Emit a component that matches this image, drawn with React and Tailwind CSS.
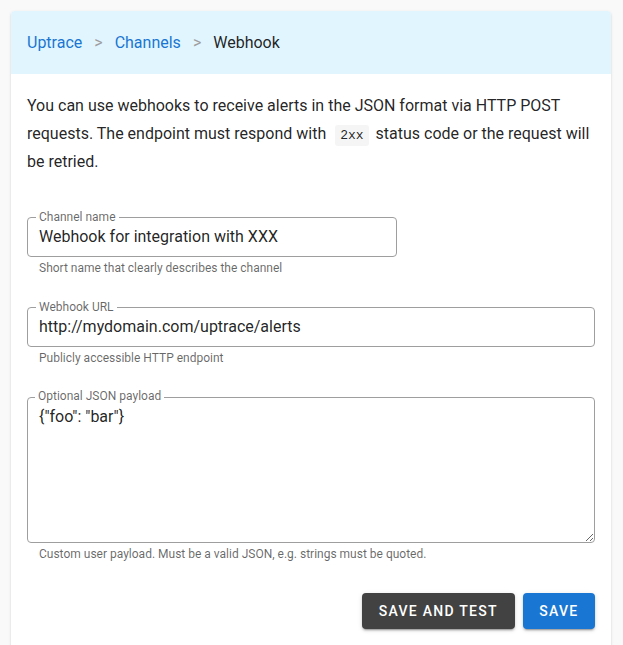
export default function App() {
  return (
    <div className="min-h-[645px] bg-[#f9f9f9] pt-[11px] pl-[11px] pr-[12px] font-['Roboto',sans-serif] text-[rgba(0,0,0,0.87)]">
      <div className="w-[600px] bg-white rounded-t-[4px] shadow-[0_2px_1px_-1px_rgba(0,0,0,0.2),0_1px_1px_0_rgba(0,0,0,0.14),0_1px_3px_0_rgba(0,0,0,0.12)] pb-[20px]">
        {/* Breadcrumbs */}
        <div className="h-[63px] bg-[#e1f5fe] rounded-t-[4px] flex items-center px-4 text-[16px]">
          <a className="text-[#1976d2]">Uptrace</a>
          <span className="px-3 text-[#9e9e9e]">&gt;</span>
          <a className="text-[#1976d2]">Channels</a>
          <span className="px-3 text-[#9e9e9e]">&gt;</span>
          <span>Webhook</span>
        </div>

        <div className="px-4 pt-[18px]">
          <p className="text-[16px] leading-[28px]">
            You can use webhooks to receive alerts in the JSON format via HTTP POST requests. The endpoint must respond with{' '}
            <code className="ml-[5px] mr-[3px] font-['Liberation_Mono',monospace] text-[13px] leading-none bg-[#f5f5f5] rounded-[3px] px-[5px] py-[3px]">2xx</code>{' '}
            status code or the request will be retried.
          </p>

          {/* Channel name */}
          <div className="mt-[41px] w-[370px]">
            <div className="relative h-[40px] border border-[#9e9e9e] rounded-[4px] flex items-center pl-[11px] text-[16px]">
              <span className="absolute -top-[8px] left-[8px] bg-white px-[3px] text-[12px] leading-[14px] text-[rgba(0,0,0,0.6)]">Channel name</span>
              Webhook for integration with XXX
            </div>
            <div className="mt-[4px] pl-[12px] text-[12px] leading-[14px] text-[rgba(0,0,0,0.6)]">
              Short name that clearly describes the channel
            </div>
          </div>

          {/* Webhook URL */}
          <div className="mt-[32px]">
            <div className="relative h-[40px] border border-[#9e9e9e] rounded-[4px] flex items-center pl-[11px] text-[16px]">
              <span className="absolute -top-[8px] left-[8px] bg-white px-[3px] text-[12px] leading-[14px] text-[rgba(0,0,0,0.6)]">Webhook URL</span>
              http://mydomain.com/uptrace/alerts
            </div>
            <div className="mt-[4px] pl-[12px] text-[12px] leading-[14px] text-[rgba(0,0,0,0.6)]">
              Publicly accessible HTTP endpoint
            </div>
          </div>

          {/* JSON payload */}
          <div className="mt-[32px]">
            <div className="relative">
              <span className="absolute -top-[8px] left-[8px] z-10 bg-white px-[3px] text-[12px] leading-[14px] text-[rgba(0,0,0,0.6)]">Optional JSON payload</span>
              <textarea
                readOnly
                defaultValue={'{"foo": "bar"}'}
                className="block w-full h-[146px] border border-[#9e9e9e] rounded-[4px] pl-[11px] pt-[9px] text-[16px] leading-[20px] text-[rgba(0,0,0,0.87)] outline-none font-['Roboto',sans-serif]"
              />
            </div>
            <div className="mt-[4px] pl-[12px] text-[12px] leading-[14px] text-[rgba(0,0,0,0.6)]">
              Custom user payload. Must be a valid JSON, e.g. strings must be quoted.
            </div>
          </div>

          {/* Actions */}
          <div className="mt-[32px] flex justify-end gap-2">
            <button className="h-[36px] px-[17px] rounded-[4px] bg-[#424242] text-white text-[14px] font-medium tracking-[0.09em] uppercase shadow-[0_3px_1px_-2px_rgba(0,0,0,0.2),0_2px_2px_0_rgba(0,0,0,0.14),0_1px_5px_0_rgba(0,0,0,0.12)]">
              Save and test
            </button>
            <button className="h-[36px] px-[16.5px] rounded-[4px] bg-[#1976d2] text-white text-[14px] font-medium tracking-[0.09em] uppercase shadow-[0_3px_1px_-2px_rgba(0,0,0,0.2),0_2px_2px_0_rgba(0,0,0,0.14),0_1px_5px_0_rgba(0,0,0,0.12)]">
              Save
            </button>
          </div>
        </div>
      </div>
    </div>
  );
}
